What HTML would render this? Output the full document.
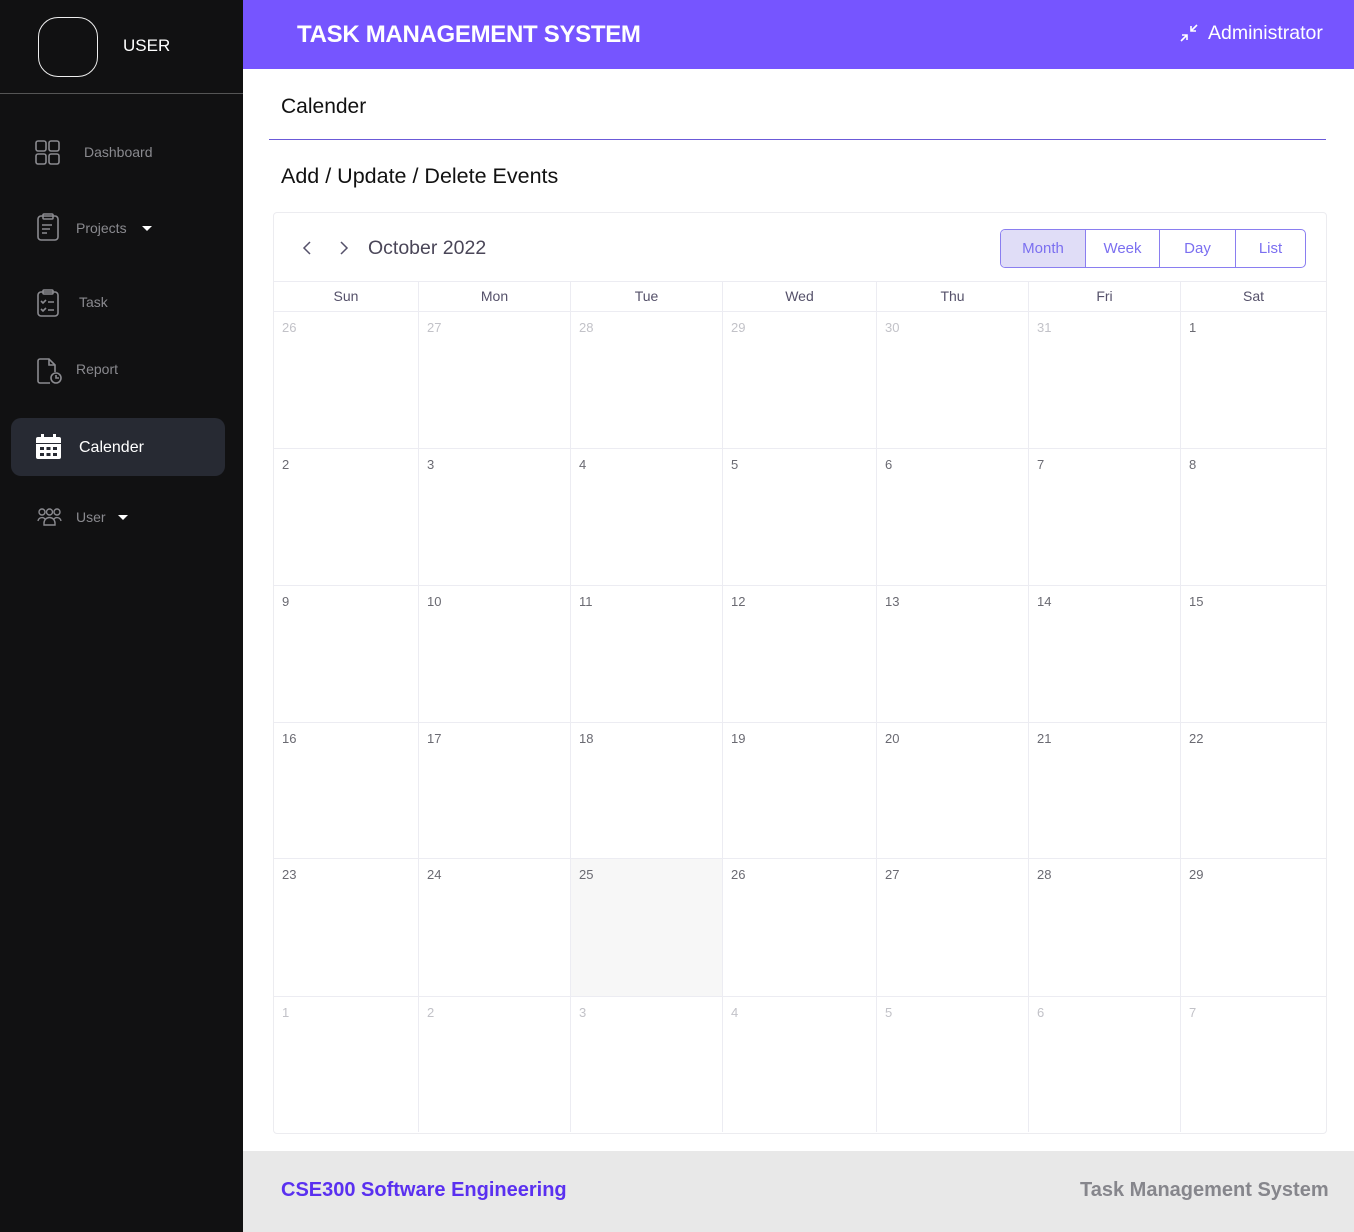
<!DOCTYPE html>
<html><head><meta charset="utf-8"><style>
*{box-sizing:border-box;margin:0;padding:0}
body{width:1354px;height:1232px;position:relative;font-family:"Liberation Sans",sans-serif;background:#fff;overflow:hidden}
.sb{position:absolute;left:0;top:0;width:243px;height:1232px;background:#111112}
.av{position:absolute;left:38px;top:17px;width:60px;height:60px;border:1.5px solid #eee;border-radius:20px}
.un{position:absolute;left:123px;top:36px;color:#fff;font-size:17px}
.hr{position:absolute;left:0;top:93px;width:243px;height:1px;background:#555}
.it{position:absolute;color:#8a8a8f;font-size:14px}
.ic{position:absolute}
.act{position:absolute;left:11px;top:418px;width:214px;height:58px;background:#272a33;border-radius:10px}
.top{position:absolute;left:243px;top:0;width:1111px;height:69px;background:#7655ff}
.ttl{position:absolute;left:297px;top:21px;color:#fff;font-weight:bold;font-size:24px;letter-spacing:-0.3px}
.adm{position:absolute;left:1208px;top:22px;color:#fff;font-size:19.5px}
.h1{position:absolute;left:281px;top:95px;font-size:21px;color:#111}
.line{position:absolute;left:269px;top:139px;width:1057px;height:1px;background:#6b5ad8}
.h2{position:absolute;left:281px;top:164px;font-size:21.5px;color:#111}
.cal{position:absolute;left:273px;top:212px;width:1054px;height:922px;border:1px solid #ececf0;border-radius:4px}
.mon{position:absolute;left:368px;top:237px;font-size:19.5px;color:#4a4658}
.btns{position:absolute;left:1000px;top:229px;height:39px;display:flex;border:1px solid #8a7ef0;border-radius:5px;overflow:hidden}
.btns div{color:#7b6ff0;font-size:15px;display:flex;align-items:center;justify-content:center;border-left:1px solid #8a7ef0}
.btns div:first-child{border-left:none;background:#e0ddf7}
.grid{position:absolute;left:274px;top:281px;display:grid;grid-template-columns:145px 152px 152px 154px 152px 152px 145px;grid-template-rows:30px 137px 137px 137px 136px 138px 136px}
.grid div{border-right:1px solid #ececf2;border-top:1px solid #ececf2;font-size:13px;color:#6a6a72;padding:8px 8px}
.grid div:nth-child(7n){border-right:none}
.grid .d{text-align:center;color:#55516a;font-size:14px;padding:6px 0}
.grid .o{color:#c2c2c8}
.grid .t{background:#f7f7f7}
.ft{position:absolute;left:243px;top:1151px;width:1111px;height:81px;background:#e8e8e8}
.f1{position:absolute;left:281px;top:1179px;color:#5a30f0;font-size:20px;font-weight:bold}
.f2{position:absolute;left:1080px;top:1179px;color:#86868c;font-size:20px;font-weight:bold}
</style></head><body>
<div class="sb"></div>
<div class="av"></div><div class="un">USER</div><div class="hr"></div>
<svg class="ic" style="left:35px;top:140px" width="25" height="25" viewBox="0 0 25 25" fill="none" stroke="#8a8a8f" stroke-width="1.6"><rect x="1" y="1" width="10" height="10" rx="2"/><rect x="14" y="1" width="10" height="10" rx="2"/><rect x="1" y="14" width="10" height="10" rx="2"/><rect x="14" y="14" width="10" height="10" rx="2"/></svg>
<div class="it" style="left:84px;top:144px">Dashboard</div>
<svg class="ic" style="left:37px;top:213px" width="22" height="28" viewBox="0 0 22 28" fill="none" stroke="#8a8a8f" stroke-width="1.6"><rect x="1" y="3" width="20" height="24" rx="3"/><rect x="6" y="1" width="10" height="5" rx="1"/><path d="M5 12h10M5 16h8M5 20h5"/></svg>
<div class="it" style="left:76px;top:220px">Projects</div>
<svg class="ic" style="left:141px;top:225px" width="12" height="7"><path d="M1 1h10L6 6z" fill="#fff"/></svg>
<svg class="ic" style="left:37px;top:289px" width="22" height="28" viewBox="0 0 22 28" fill="none" stroke="#8a8a8f" stroke-width="1.6"><rect x="1" y="3" width="20" height="24" rx="3"/><rect x="6" y="1" width="10" height="4" rx="1"/><path d="M4 12l2 2 3-3M11 13h6M4 20l2 2 3-3M11 21h6"/></svg>
<div class="it" style="left:79px;top:294px">Task</div>
<svg class="ic" style="left:37px;top:358px" width="25" height="27" viewBox="0 0 25 27" fill="none" stroke="#8a8a8f" stroke-width="1.6"><path d="M13 25H3a2 2 0 0 1-2-2V3a2 2 0 0 1 2-2h9l6 6v7"/><path d="M12 1v6h6"/><circle cx="19" cy="20" r="5"/><path d="M19 17v3h3"/></svg>
<div class="it" style="left:76px;top:361px">Report</div>
<div class="act"></div>
<svg class="ic" style="left:36px;top:434px" width="25" height="25" viewBox="0 0 25 25"><rect x="5" y="0" width="3" height="5" fill="#fff"/><rect x="17" y="0" width="3" height="5" fill="#fff"/><path d="M0 5a2 2 0 0 1 2-2h21a2 2 0 0 1 2 2v4H0z" fill="#fff"/><path d="M0 10h25v13a2 2 0 0 1-2 2H2a2 2 0 0 1-2-2z" fill="#fff"/><g fill="#272a33"><rect x="4" y="13" width="4" height="3"/><rect x="10.5" y="13" width="4" height="3"/><rect x="17" y="13" width="4" height="3"/><rect x="4" y="19" width="4" height="3"/><rect x="10.5" y="19" width="4" height="3"/><rect x="17" y="19" width="4" height="3"/></g></svg>
<div style="position:absolute;left:79px;top:439px;color:#fff;font-size:16px">Calender</div>
<svg class="ic" style="left:37px;top:508px" width="25" height="18" viewBox="0 0 25 18" fill="none" stroke="#8a8a8f" stroke-width="1.4"><circle cx="5" cy="4" r="3"/><circle cx="12.5" cy="4" r="3"/><circle cx="20" cy="4" r="3"/><path d="M1 13a4 4 0 0 1 7-2M24 13a4 4 0 0 0-7-2M7 17v-2a5.5 5.5 0 0 1 11 0v2z"/></svg>
<div class="it" style="left:76px;top:509px">User</div>
<svg class="ic" style="left:117px;top:514px" width="12" height="7"><path d="M1 1h10L6 6z" fill="#fff"/></svg>

<div class="top"></div>
<div class="ttl">TASK MANAGEMENT SYSTEM</div>
<svg class="ic" style="left:1180px;top:24px" width="18" height="18" viewBox="0 0 18 18" fill="none" stroke="#fff" stroke-width="1.6"><path d="M17 1l-6 6M11 2v5h5M1 17l6-6M7 16v-5H2"/></svg>
<div class="adm">Administrator</div>

<div class="h1">Calender</div><div class="line"></div>
<div class="h2">Add / Update / Delete Events</div>
<div class="cal"></div>
<svg class="ic" style="left:302px;top:240px" width="10" height="16" viewBox="0 0 10 16" fill="none" stroke="#55516a" stroke-width="1.5"><path d="M8 2L2 8l6 6"/></svg>
<svg class="ic" style="left:339px;top:240px" width="10" height="16" viewBox="0 0 10 16" fill="none" stroke="#55516a" stroke-width="1.5"><path d="M2 2l6 6-6 6"/></svg>
<div class="mon">October 2022</div>
<div class="btns"><div style="width:84px">Month</div><div style="width:74px">Week</div><div style="width:76px">Day</div><div style="width:70px">List</div></div>
<div class="grid">
<div class="d">Sun</div><div class="d">Mon</div><div class="d">Tue</div><div class="d">Wed</div><div class="d">Thu</div><div class="d">Fri</div><div class="d">Sat</div>
<div class="o">26</div><div class="o">27</div><div class="o">28</div><div class="o">29</div><div class="o">30</div><div class="o">31</div><div>1</div>
<div>2</div><div>3</div><div>4</div><div>5</div><div>6</div><div>7</div><div>8</div>
<div>9</div><div>10</div><div>11</div><div>12</div><div>13</div><div>14</div><div>15</div>
<div>16</div><div>17</div><div>18</div><div>19</div><div>20</div><div>21</div><div>22</div>
<div>23</div><div>24</div><div class="t">25</div><div>26</div><div>27</div><div>28</div><div>29</div>
<div class="o">1</div><div class="o">2</div><div class="o">3</div><div class="o">4</div><div class="o">5</div><div class="o">6</div><div class="o">7</div>
</div>
<div class="ft"></div>
<div class="f1">CSE300 Software Engineering</div>
<div class="f2">Task Management System</div>
</body></html>
